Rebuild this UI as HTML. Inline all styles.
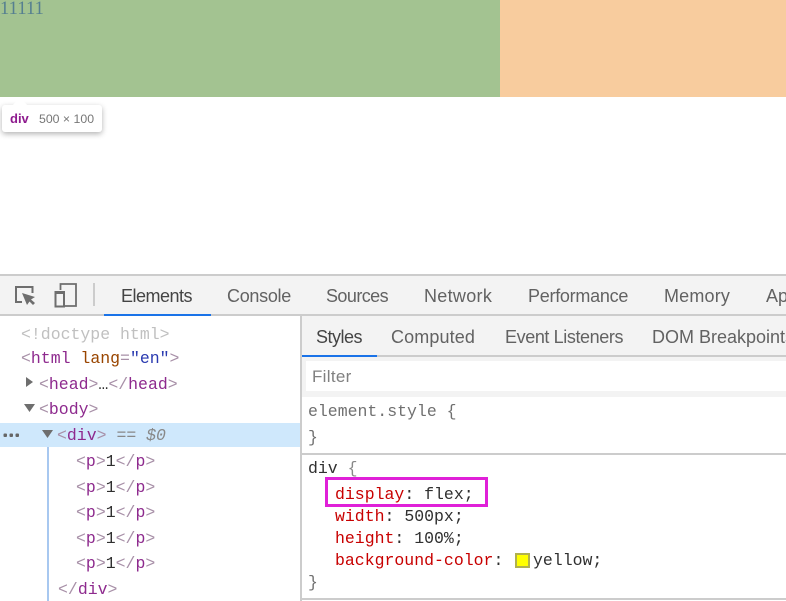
<!DOCTYPE html>
<html lang="en"><head><meta charset="utf-8"><title>DevTools</title>
<style>
html,body{margin:0;padding:0;background:#fff}
#r{position:relative;width:786px;height:601px;overflow:hidden;background:#fff}
#r div{position:absolute}
.t{position:absolute;white-space:pre;line-height:22px;height:22px}
.m{font-family:"Liberation Mono",monospace;font-size:16.5px;color:#303030}
.u{font-family:"Liberation Sans",sans-serif;font-size:18px;color:#626262}
.g{color:#a890a8}.p{color:#8e2a8e}.a{color:#994500}.v{color:#2a3ab0}.k{color:#c80000}.l{color:#888}
</style></head><body><div id="r">
<div style="left:0;top:0;width:500px;height:97px;background:#a3c391"></div>
<div style="left:500px;top:0;width:286px;height:97px;background:#f8cc9e"></div>
<span class="t" style="left:0;top:-2px;font:18.5px/22px 'Liberation Serif',serif;letter-spacing:.1px;color:#557f90">11111</span>
<div style="left:2px;top:105px;width:100px;height:27px;background:#fff;border-radius:3px;box-shadow:0 2px 6px rgba(0,0,0,.3)"></div>
<svg style="position:absolute;left:12px;top:97px" width="16" height="9"><path d="M0 9L8 0L16 9Z" fill="#fff"/></svg>
<span class="t" style="left:10px;top:108px;font:bold 13px/22px 'Liberation Sans',sans-serif;color:#8e1a8e">div</span>
<span class="t" style="left:39px;top:108px;font:12.3px/22px 'Liberation Sans',sans-serif;color:#777">500 × 100</span>

<div style="left:0;top:274px;width:786px;height:2px;background:#ccc"></div>
<div style="left:0;top:276px;width:786px;height:38px;background:#f3f3f3"></div>
<div style="left:0;top:314px;width:786px;height:2px;background:#ccc"></div>
<div style="left:104px;top:314px;width:107px;height:2px;background:#1a73e8"></div>
<div style="left:93px;top:283px;width:2px;height:23px;background:#ccc"></div>
<svg style="position:absolute;left:14px;top:284px" width="24" height="24" fill="none"><path d="M8 18H2V3H18.500V9" stroke="#6e6e6e" stroke-width="2"/><path d="M8 9L21 13L17 15.500L21 19L19 21L15.500 17.500L13 21Z" fill="#6e6e6e"/></svg>
<svg style="position:absolute;left:50px;top:280px" width="30" height="30" fill="none"><path d="M10.500 10V4H26V26H15" stroke="#6e6e6e" stroke-width="1.800"/><rect x="5.500" y="12" width="8.500" height="14.500" stroke="#6e6e6e" stroke-width="2"/><path d="M4.500 12.500H15" stroke="#6e6e6e" stroke-width="3"/></svg>
<span class="t u" style="left:121px;top:285px;color:#444;letter-spacing:-.5px">Elements</span>
<span class="t u" style="left:227px;top:285px;letter-spacing:-.3px">Console</span>
<span class="t u" style="left:326px;top:285px;letter-spacing:-.57px">Sources</span>
<span class="t u" style="left:424px;top:285px;letter-spacing:.3px">Network</span>
<span class="t u" style="left:528px;top:285px;letter-spacing:-.27px">Performance</span>
<span class="t u" style="left:664px;top:285px;letter-spacing:.17px">Memory</span>
<span class="t u" style="left:766px;top:285px">Ap</span>

<div style="left:0;top:423px;width:300px;height:24px;background:#cfe8fc"></div>
<div style="left:47px;top:447px;width:2px;height:154px;background:#a8c8f0"></div>
<svg style="position:absolute;left:0;top:0" width="60" height="450"><path d="M26 377L33 382L26 387Z" fill="#6e6e6e"/><path d="M24 404H35L29.500 412Z" fill="#6e6e6e"/><path d="M42 430H53L47.500 438Z" fill="#6e6e6e"/><rect x="3.500" y="433.500" width="3.500" height="3.500" rx="1" fill="#666"/><rect x="9.500" y="433.500" width="3.500" height="3.500" rx="1" fill="#666"/><rect x="15.500" y="433.500" width="3.500" height="3.500" rx="1" fill="#666"/></svg>
<span class="t m" style="left:21px;top:324px;color:#c0c0c0">&lt;!doctype html&gt;</span>
<span class="t m" style="left:21px;top:348px"><span class="g">&lt;</span><span class="p">html</span> <span class="a">lang</span><span class="g">=</span><span class="v">"en"</span><span class="g">&gt;</span></span>
<span class="t m" style="left:39px;top:374px"><span class="g">&lt;</span><span class="p">head</span><span class="g">&gt;</span>…<span class="g">&lt;/</span><span class="p">head</span><span class="g">&gt;</span></span>
<span class="t m" style="left:39px;top:399px"><span class="g">&lt;</span><span class="p">body</span><span class="g">&gt;</span></span>
<span class="t m" style="left:57px;top:425px"><span class="g">&lt;</span><span class="p">div</span><span class="g">&gt;</span> <span class="l">== <i>$0</i></span></span>
<span class="t m" style="left:76px;top:451px"><span class="g">&lt;</span><span class="p">p</span><span class="g">&gt;</span>1<span class="g">&lt;/</span><span class="p">p</span><span class="g">&gt;</span></span>
<span class="t m" style="left:76px;top:477px"><span class="g">&lt;</span><span class="p">p</span><span class="g">&gt;</span>1<span class="g">&lt;/</span><span class="p">p</span><span class="g">&gt;</span></span>
<span class="t m" style="left:76px;top:502px"><span class="g">&lt;</span><span class="p">p</span><span class="g">&gt;</span>1<span class="g">&lt;/</span><span class="p">p</span><span class="g">&gt;</span></span>
<span class="t m" style="left:76px;top:528px"><span class="g">&lt;</span><span class="p">p</span><span class="g">&gt;</span>1<span class="g">&lt;/</span><span class="p">p</span><span class="g">&gt;</span></span>
<span class="t m" style="left:76px;top:553px"><span class="g">&lt;</span><span class="p">p</span><span class="g">&gt;</span>1<span class="g">&lt;/</span><span class="p">p</span><span class="g">&gt;</span></span>
<span class="t m" style="left:58px;top:579px"><span class="g">&lt;/</span><span class="p">div</span><span class="g">&gt;</span></span>

<div style="left:300px;top:316px;width:2px;height:285px;background:#ccc"></div>
<div style="left:302px;top:316px;width:484px;height:39px;background:#f3f3f3"></div>
<div style="left:302px;top:355px;width:484px;height:2px;background:#ccc"></div>
<div style="left:302px;top:355px;width:75px;height:2px;background:#1a73e8"></div>
<div style="left:302px;top:357px;width:484px;height:40px;background:#f3f3f3"></div>
<div style="left:306px;top:361px;width:480px;height:30px;background:#fff"></div>
<span class="t u" style="left:316px;top:326px;color:#444;letter-spacing:-.5px">Styles</span>
<span class="t u" style="left:391px;top:326px;letter-spacing:.12px">Computed</span>
<span class="t u" style="left:505px;top:326px;letter-spacing:-.4px">Event Listeners</span>
<span class="t u" style="left:652px;top:326px">DOM Breakpoints</span>
<span class="t u" style="left:312px;top:366px;font-size:17px;color:#808080;letter-spacing:.3px">Filter</span>
<span class="t m" style="left:308px;top:401px;color:#707070">element.style {</span>
<span class="t m" style="left:308px;top:427px;color:#707070">}</span>
<div style="left:302px;top:453px;width:484px;height:2px;background:#ccc"></div>
<span class="t m" style="left:308px;top:458px">div <span class="l">{</span></span>
<div style="left:325px;top:477px;width:157px;height:24px;border:3px solid #e020d8"></div>
<span class="t m" style="left:335px;top:484px"><span class="k">display</span>: flex;</span>
<span class="t m" style="left:335px;top:506px"><span class="k">width</span>: 500px;</span>
<span class="t m" style="left:335px;top:528px"><span class="k">height</span>: 100%;</span>
<span class="t m" style="left:335px;top:550px"><span class="k">background-color</span>:</span>
<div style="left:515px;top:553px;width:11px;height:11px;background:#ff0;border:2px solid #b0b050"></div>
<span class="t m" style="left:533px;top:550px">yellow;</span>
<span class="t m" style="left:308px;top:572px;color:#707070">}</span>
<div style="left:302px;top:598px;width:484px;height:2px;background:#ccc"></div>
</div></body></html>
